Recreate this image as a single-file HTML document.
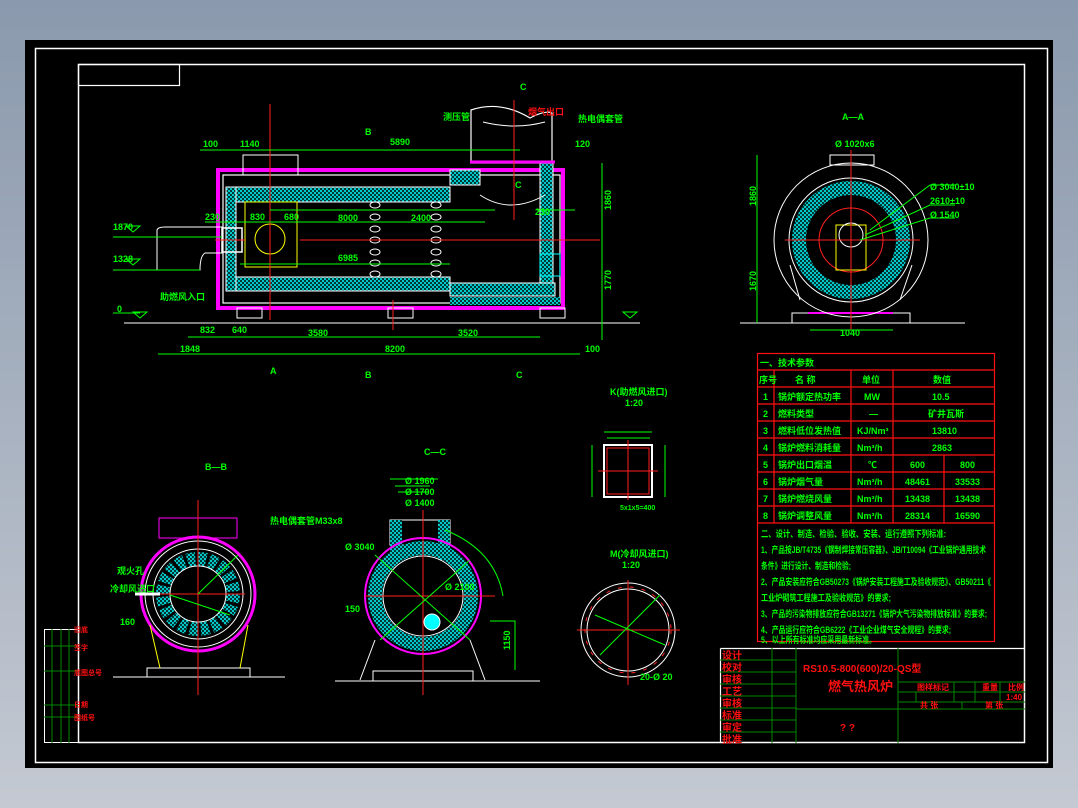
<!DOCTYPE html>
<html><head><meta charset="utf-8"><style>
html,body{margin:0;padding:0;}
body{width:1078px;height:808px;overflow:hidden;background:linear-gradient(#8a99ad,#c4c9d2);font-family:"Liberation Sans","Noto Sans CJK SC",sans-serif;}
svg{position:absolute;left:0;top:0;}
text{font-family:"Liberation Sans","Noto Sans CJK SC",sans-serif;}
.g{fill:#00ff00;font-size:9px;font-weight:bold}
.r{fill:#ff1010;font-size:10px;font-weight:bold}
</style></head><body>
<svg width="1078" height="808" viewBox="0 0 1078 808">
<defs>
<pattern id="cy" width="4" height="4" patternUnits="userSpaceOnUse"><rect width="4" height="4" fill="#00c8c8"/><rect width="2" height="2" fill="#003838"/><rect x="2" y="2" width="2" height="2" fill="#003838"/></pattern>
</defs>
<rect x="25" y="40" width="1028" height="728" fill="#000"/>
<rect x="35.5" y="48.5" width="1012" height="714" fill="none" stroke="#fff" stroke-width="1.5"/>
<rect x="78.5" y="64.5" width="946" height="678" fill="none" stroke="#fff" stroke-width="1.5"/>
<rect x="78.5" y="64.5" width="101" height="21" fill="none" stroke="#fff" stroke-width="1.2"/>

<!-- MAIN ELEVATION -->
<g>
<line x1="124" y1="323" x2="640" y2="323" stroke="#fff"/>
<rect x="218" y="170" width="345" height="138" fill="none" stroke="#ff00ff" stroke-width="4"/>
<rect x="223" y="175" width="337" height="128" fill="none" stroke="#fff" stroke-width="1.2"/>
<rect x="232" y="187" width="218" height="15" fill="url(#cy)" stroke="#fff"/>
<rect x="232" y="277" width="218" height="14" fill="url(#cy)" stroke="#fff"/>
<rect x="226" y="187" width="10" height="104" fill="url(#cy)" stroke="#fff"/>
<rect x="450" y="170" width="30" height="15" fill="url(#cy)" stroke="#fff"/>
<rect x="540" y="163" width="13" height="125" fill="url(#cy)" stroke="#fff"/>
<rect x="450" y="283" width="105" height="13" fill="url(#cy)" stroke="#fff"/>
<rect x="450" y="297" width="110" height="8" fill="url(#cy)"/>
<path d="M471 110 Q500 100 530 118 Q545 110 552 113 L552 163 L471 163 Z" fill="none" stroke="#fff" stroke-width="1.2"/>
<path d="M483 122 Q515 130 545 122" fill="none" stroke="#fff"/>
<path d="M480 195 Q510 215 545 195" fill="none" stroke="#fff"/>
<line x1="470" y1="162" x2="555" y2="162" stroke="#ff00ff" stroke-width="3"/>
<rect x="243" y="155" width="55" height="20" fill="none" stroke="#fff"/>
<rect x="245" y="202" width="52" height="65" fill="none" stroke="#ffff00"/>
<circle cx="270" cy="239" r="15" fill="none" stroke="#ffff00"/>
<path d="M157 230 Q158 227 165 227 L222 227 L222 253 L205 253 Q200 256 200 270 L157 270 Z" fill="none" stroke="#fff"/>
<rect x="222" y="228" width="20" height="24" fill="none" stroke="#fff" stroke-width="1.5"/>
<rect x="540" y="254" width="20" height="22" fill="none" stroke="#0ff"/>
<g fill="none" stroke="#fff">
<ellipse cx="375" cy="205" rx="5" ry="3"/><ellipse cx="375" cy="217" rx="5" ry="3"/><ellipse cx="375" cy="229" rx="5" ry="3"/><ellipse cx="375" cy="240" rx="5" ry="3"/><ellipse cx="375" cy="252" rx="5" ry="3"/><ellipse cx="375" cy="263" rx="5" ry="3"/><ellipse cx="375" cy="274" rx="5" ry="3"/>
<ellipse cx="436" cy="205" rx="5" ry="3"/><ellipse cx="436" cy="217" rx="5" ry="3"/><ellipse cx="436" cy="229" rx="5" ry="3"/><ellipse cx="436" cy="240" rx="5" ry="3"/><ellipse cx="436" cy="252" rx="5" ry="3"/><ellipse cx="436" cy="263" rx="5" ry="3"/><ellipse cx="436" cy="274" rx="5" ry="3"/>
<rect x="237" y="308" width="25" height="10"/><rect x="388" y="308" width="25" height="10"/><rect x="540" y="308" width="25" height="10"/>
</g>
<g stroke="#ff2020" stroke-width="1">
<line x1="270" y1="104" x2="270" y2="320"/><line x1="514" y1="100" x2="514" y2="220"/>
<line x1="215" y1="240" x2="245" y2="240"/><line x1="300" y1="240" x2="600" y2="240"/>
<line x1="393" y1="300" x2="393" y2="330"/>
</g>
<g stroke="#00ff00" stroke-width="1" fill="none">
<line x1="200" y1="150" x2="520" y2="150"/><line x1="270" y1="210" x2="495" y2="210"/>
<line x1="205" y1="222" x2="485" y2="222"/><line x1="240" y1="264" x2="450" y2="264"/>
<line x1="158" y1="354" x2="580" y2="354"/><line x1="188" y1="337" x2="540" y2="337"/>
<line x1="602" y1="163" x2="602" y2="340"/><line x1="113" y1="237" x2="222" y2="237"/>
<line x1="113" y1="270" x2="200" y2="270"/><line x1="113" y1="313" x2="140" y2="313"/>
<line x1="537" y1="210" x2="575" y2="210"/>
<path d="M133 232 l7 -6 h-14 z M133 265 l7 -6 h-14 z M140 318 l7 -6 h-14 z M630 318 l7 -6 h-14 z"/>
</g>
<text class="g" x="203" y="147">100</text><text class="g" x="240" y="147">1140</text>
<text class="g" x="390" y="145">5890</text><text class="g" x="365" y="135">B</text>
<text class="g" x="113" y="230">1870</text><text class="g" x="113" y="262">1328</text><text class="g" x="117" y="312">0</text>
<text class="g" x="205" y="220">230</text><text class="g" x="250" y="220">830</text><text class="g" x="284" y="220">680</text>
<text class="g" x="338" y="221">8000</text><text class="g" x="411" y="221">2400</text><text class="g" x="338" y="261">6985</text>
<text class="g" x="200" y="333">832</text><text class="g" x="232" y="333">640</text><text class="g" x="308" y="336">3580</text><text class="g" x="458" y="336">3520</text>
<text class="g" x="180" y="352">1848</text><text class="g" x="385" y="352">8200</text><text class="g" x="585" y="352">100</text>
<text class="g" x="535" y="215">230</text><text class="g" x="575" y="147">120</text>
<text class="g" x="160" y="300">助燃风入口</text><text class="g" x="443" y="120">测压管</text><text class="g" x="578" y="122">热电偶套管</text>
<text class="g" x="515" y="188">C</text><text class="g" x="520" y="90">C</text>
<text class="r" x="528" y="115" style="font-size:9px">烟气出口</text>
<text class="g" x="596" y="205" transform="rotate(-90 606 200)">1860</text>
<text class="g" x="596" y="285" transform="rotate(-90 606 280)">1770</text>
<text class="g" x="270" y="374">A</text><text class="g" x="365" y="378">B</text><text class="g" x="516" y="378">C</text>
</g>

<!-- A-A VIEW -->
<g fill="none">
<text class="g" x="842" y="120">A—A</text>
<line x1="740" y1="323" x2="965" y2="323" stroke="#fff"/>
<rect x="792" y="313" width="118" height="10" stroke="#fff"/>
<line x1="808" y1="313" x2="893" y2="313" stroke="#ff00ff" stroke-width="2"/>
<circle cx="851" cy="240" r="77" stroke="#fff"/>
<circle cx="851" cy="240" r="62" stroke="#fff"/>
<circle cx="851" cy="240" r="52" stroke="url(#cy)" stroke-width="14"/>
<circle cx="851" cy="240" r="32" stroke="#ff2020"/>
<rect x="836" y="225" width="30" height="45" stroke="#ffff00"/>
<circle cx="851" cy="235" r="12" stroke="#fff"/>
<rect x="830" y="155" width="44" height="10" stroke="#fff"/>
<line x1="851" y1="150" x2="851" y2="330" stroke="#ff2020"/>
<line x1="785" y1="240" x2="920" y2="240" stroke="#ff2020"/>
<path d="M800 300 L790 265 M900 300 L912 265" stroke="#fff"/>
<line x1="757" y1="155" x2="757" y2="323" stroke="#00ff00"/>
<line x1="810" y1="330" x2="893" y2="330" stroke="#00ff00"/>
<path d="M870 230 L930 185 L955 185 M865 235 L930 205 L955 205 M860 240 L930 218 L955 218" stroke="#00ff00"/>
</g>
<text class="g" x="835" y="147">Ø 1020x6</text>
<text class="g" x="930" y="190">Ø 3040±10</text><text class="g" x="930" y="204">2610±10</text><text class="g" x="930" y="218">Ø 1540</text>
<text class="g" x="840" y="336">1040</text>
<text class="g" x="742" y="200" transform="rotate(-90 752 196)">1860</text>
<text class="g" x="742" y="285" transform="rotate(-90 752 281)">1670</text>

<!-- B-B VIEW -->
<g fill="none">
<text class="g" x="205" y="470">B—B</text>
<line x1="113" y1="677" x2="285" y2="677" stroke="#fff"/>
<rect x="147" y="668" width="103" height="9" stroke="#fff"/>
<rect x="159" y="518" width="78" height="20" stroke="#ff00ff"/>
<circle cx="198" cy="594" r="57" stroke="#ff00ff" stroke-width="3"/>
<circle cx="198" cy="594" r="53" stroke="#fff"/>
<circle cx="198" cy="594" r="45" stroke="#fff"/>
<circle cx="198" cy="594" r="35" stroke="url(#cy)" stroke-width="14" stroke-dasharray="8 3"/>
<circle cx="198" cy="594" r="28" stroke="#fff"/>
<line x1="198" y1="500" x2="198" y2="695" stroke="#ff2020"/>
<line x1="135" y1="594" x2="245" y2="594" stroke="#ff2020"/>
<line x1="135" y1="594" x2="160" y2="594" stroke="#fff" stroke-width="3"/>
<path d="M150 625 L160 668 M248 625 L240 668" stroke="#ffff00"/>
<path d="M170 595 L230 615 M198 594 L238 555" stroke="#00ff00"/>
</g>
<text class="g" x="270" y="524">热电偶套管M33x8</text><text class="g" x="117" y="574">观火孔</text><text class="g" x="110" y="592">冷却风进口</text><text class="g" x="120" y="625">160</text>

<!-- C-C VIEW -->
<g fill="none">
<text class="g" x="424" y="455">C—C</text>
<line x1="335" y1="681" x2="540" y2="681" stroke="#fff"/>
<rect x="373" y="671" width="100" height="10" stroke="#fff"/>
<rect x="390" y="520" width="60" height="25" stroke="#fff"/>
<rect x="390" y="520" width="12" height="40" fill="url(#cy)"/>
<rect x="438" y="520" width="12" height="40" fill="url(#cy)"/>
<circle cx="423" cy="596" r="58" stroke="#ff00ff" stroke-width="2"/>
<circle cx="423" cy="596" r="48" stroke="url(#cy)" stroke-width="14"/>
<circle cx="423" cy="596" r="40" stroke="#fff"/>
<circle cx="432" cy="622" r="8" fill="#0ff" stroke="#fff"/>
<line x1="423" y1="510" x2="423" y2="695" stroke="#ff2020"/>
<line x1="365" y1="596" x2="495" y2="596" stroke="#ff2020"/>
<path d="M360 680 L375 640 M485 680 L470 640" stroke="#fff"/>
<path d="M398 492 L428 492 M395 486 L430 486 M390 479 L438 479" stroke="#00ff00"/>
<path d="M375 555 L470 640 M380 640 L470 560 M445 530 Q495 550 503 596" stroke="#00ff00"/>
<path d="M490 621 L515 621 L515 670" stroke="#00ff00"/>
</g>
<text class="g" x="405" y="484">Ø 1960</text><text class="g" x="405" y="495">Ø 1700</text><text class="g" x="405" y="506">Ø 1400</text>
<text class="g" x="345" y="550">Ø 3040</text><text class="g" x="445" y="590">Ø 2100</text><text class="g" x="345" y="612">150</text>
<text class="g" x="500" y="640" transform="rotate(-90 510 640)">1150</text>

<!-- K VIEW -->
<g fill="none">
<text class="g" x="610" y="395">K(助燃风进口)</text><text class="g" x="625" y="406">1:20</text>
<rect x="604" y="445" width="48" height="52" stroke="#fff" stroke-width="2"/>
<rect x="607" y="448" width="42" height="46" stroke="#ff2020"/>
<line x1="628" y1="440" x2="628" y2="500" stroke="#ff2020"/>
<line x1="598" y1="471" x2="658" y2="471" stroke="#ff2020"/>
<path d="M604 432 L652 432 M607 438 L650 438 M592 445 L592 497 M665 445 L665 497" stroke="#00ff00"/>
</g>
<text class="g" x="620" y="510" style="font-size:7px">5x1x5=400</text>

<!-- M VIEW -->
<g fill="none">
<text class="g" x="610" y="557">M(冷却风进口)</text><text class="g" x="622" y="568">1:20</text>
<circle cx="628" cy="630" r="47" stroke="#fff"/>
<circle cx="628" cy="630" r="43" stroke="#ff2020" stroke-dasharray="4 8"/>
<circle cx="628" cy="630" r="41" stroke="#fff"/>
<line x1="628" y1="580" x2="628" y2="685" stroke="#ff2020"/>
<line x1="577" y1="630" x2="680" y2="630" stroke="#ff2020"/>
<path d="M595 615 L665 645 M600 655 L660 595" stroke="#00ff00"/>
</g>
<text class="g" x="640" y="680">20-Ø 20</text>

<!-- TECH TABLE -->
<g stroke="#ff1010" stroke-width="1.2" fill="none">
<rect x="757.5" y="353.5" width="237" height="288"/>
<path d="M757 370H994 M757 387H994 M757 404H994 M757 421H994 M757 438H994 M757 455H994 M757 472H994 M757 489H994 M757 506H994 M757 523H994"/>
<path d="M774 370V523 M851 370V523 M893 370V523 M944 455V523"/>
</g>
<g class="g">
<text x="760" y="366">一、技术参数</text>
<text x="759" y="383">序号</text><text x="795" y="383">名 称</text><text x="862" y="383">单位</text><text x="933" y="383">数值</text>
<text x="763" y="400">1</text><text x="778" y="400">锅炉额定热功率</text><text x="864" y="400">MW</text><text x="932" y="400">10.5</text>
<text x="763" y="417">2</text><text x="778" y="417">燃料类型</text><text x="869" y="417">—</text><text x="928" y="417">矿井瓦斯</text>
<text x="763" y="434">3</text><text x="778" y="434">燃料低位发热值</text><text x="857" y="434">KJ/Nm³</text><text x="932" y="434">13810</text>
<text x="763" y="451">4</text><text x="778" y="451">锅炉燃料消耗量</text><text x="857" y="451">Nm³/h</text><text x="932" y="451">2863</text>
<text x="763" y="468">5</text><text x="778" y="468">锅炉出口烟温</text><text x="868" y="468">℃</text><text x="910" y="468">600</text><text x="960" y="468">800</text>
<text x="763" y="485">6</text><text x="778" y="485">锅炉烟气量</text><text x="857" y="485">Nm³/h</text><text x="905" y="485">48461</text><text x="955" y="485">33533</text>
<text x="763" y="502">7</text><text x="778" y="502">锅炉燃烧风量</text><text x="857" y="502">Nm³/h</text><text x="905" y="502">13438</text><text x="955" y="502">13438</text>
<text x="763" y="519">8</text><text x="778" y="519">锅炉调整风量</text><text x="857" y="519">Nm³/h</text><text x="905" y="519">28314</text><text x="955" y="519">16590</text>
<text x="761" y="537" textLength="185" lengthAdjust="spacingAndGlyphs">二、设计、制造、检验、验收、安装、运行遵照下列标准:</text>
<text x="761" y="553" textLength="225" lengthAdjust="spacingAndGlyphs">1、产品按JB/T4735《钢制焊接常压容器》、JB/T10094《工业锅炉通用技术</text>
<text x="761" y="569" textLength="90" lengthAdjust="spacingAndGlyphs">条件》进行设计、制造和检验;</text>
<text x="761" y="585" textLength="230" lengthAdjust="spacingAndGlyphs">2、产品安装应符合GB50273《锅炉安装工程施工及验收规范》、GB50211《</text>
<text x="761" y="601" textLength="130" lengthAdjust="spacingAndGlyphs">工业炉砌筑工程施工及验收规范》的要求;</text>
<text x="761" y="617" textLength="226" lengthAdjust="spacingAndGlyphs">3、产品的污染物排放应符合GB13271《锅炉大气污染物排放标准》的要求;</text>
<text x="761" y="633" textLength="190" lengthAdjust="spacingAndGlyphs">4、产品运行应符合GB6222《工业企业煤气安全规程》的要求;</text>
<text x="761" y="643" textLength="115" lengthAdjust="spacingAndGlyphs">5、以上所有标准均应采用最新标准。</text>
</g>

<!-- TITLE BLOCK -->
<g fill="none">
<path d="M720.5 648.5H1025 M720.5 648.5V743" stroke="#fff" stroke-width="1.2"/>
<g stroke="#008800">
<path d="M720 660H796 M720 672H796 M720 684H796 M720 696H796 M720 708H796 M720 720H796 M720 732H796"/>
<path d="M772 648V743 M796 648V743 M898 648V743"/>
<path d="M796 709H898"/>
<path d="M898 682H1025 M898 692H1025 M898 702H1025 M898 709H1025 M954 682V702 M975 682V702 M1000 682V702 M916 692V702 M962 702V709"/>
</g>
</g>
<g class="r" style="font-size:10px">
<text x="722" y="659">设计</text><text x="722" y="671">校对</text><text x="722" y="683">审核</text><text x="722" y="695">工艺</text><text x="722" y="707">审核</text><text x="722" y="719">标准</text><text x="722" y="731">审定</text><text x="722" y="743">批准</text>
<text x="803" y="672" style="font-size:10px">RS10.5-800(600)/20-QS型</text>
<text x="828" y="691" style="font-size:13px">燃气热风炉</text>
<text x="840" y="731">? ?</text>
<text x="917" y="690" style="font-size:8px">图样标记</text><text x="982" y="690" style="font-size:8px">重量</text><text x="1008" y="690" style="font-size:8px">比例</text>
<text x="1006" y="700" style="font-size:8px">1:40</text>
<text x="920" y="708" style="font-size:8px">共 张</text><text x="985" y="708" style="font-size:8px">第 张</text>
</g>

<!-- LEFT SMALL TABLE -->
<g fill="none">
<rect x="44.5" y="629.5" width="34" height="113" stroke="#fff"/>
<g stroke="#008800"><path d="M44 646H78 M44 671H78 M44 705H78 M44 717H78 M52 629V743 M61 629V743 M69 629V743"/></g>
</g>
<g class="r" style="font-size:7px"><text x="74" y="632">旧底</text><text x="74" y="650">签字</text><text x="74" y="675">底图总号</text><text x="74" y="707">日期</text><text x="74" y="720">图纸号</text></g>
</svg>
</body></html>
